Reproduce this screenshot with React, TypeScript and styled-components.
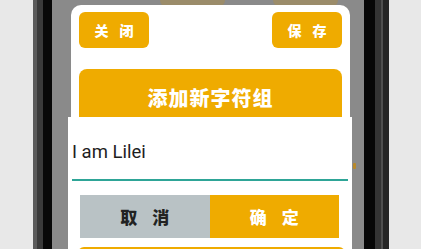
import React from "react";
import styled, { createGlobalStyle } from "styled-components";

const Global = createGlobalStyle`
  html, body { margin: 0; padding: 0; background: #e8e8e8; }
  body {
    width: 421px;
    height: 249px;
    overflow: hidden;
    font-family: Roboto, "Noto Sans CJK SC", sans-serif;
  }
`;

const ORANGE = "#efab00";

const Page = styled.div`
  width: 421px;
  height: 249px;
  box-sizing: border-box;
  display: flex;
  padding-left: 33px;
  background: #e8e8e8;
  overflow: hidden;
`;

const Phone = styled.div`
  display: flex;
  width: 356px;
  height: 100%;
`;

const LeftBezel = styled.div`
  width: 19px;
  flex: none;
  background: linear-gradient(
    to right,
    #5b5b5b 0 4px,
    #3a3a3a 4px 10px,
    #080808 10px 19px
  );
`;

const RightBezel = styled.div`
  width: 25px;
  flex: none;
  background: linear-gradient(
    to right,
    #070707 0 11px,
    #343434 11px 17px,
    #505050 17px 19px,
    #262626 19px 25px
  );
`;

const Screen = styled.div`
  flex: 1;
  position: relative;
  background: #8a8a8a;
  overflow: hidden;
`;

const Backdrop = styled.div`
  display: flex;
  flex-direction: column;
`;

const BackdropRow = styled.div`
  display: flex;
  gap: 48px;
  padding-left: 108px;
`;

const FadedButton = styled.div`
  width: 65px;
  height: 7px;
  background: #9b8c6a;
  border-radius: 0 0 8px 8px;
`;

const FadedMark = styled.div`
  margin: 156px 0 0 301px;
  width: 3px;
  height: 6px;
  background: #b8892a;
  border-radius: 1px;
`;

const ModalLayer = styled.div`
  position: absolute;
  inset: 0;
  padding: 5px 0 0 19px;
`;

const Card = styled.div`
  width: 279px;
  height: 300px;
  box-sizing: border-box;
  background: #fff;
  border-radius: 10px 10px 0 0;
  padding: 7px 8px 0;
  display: flex;
  flex-direction: column;
`;

const CardHeader = styled.div`
  display: flex;
  justify-content: space-between;
`;

const PillButton = styled.div`
  width: 70px;
  height: 36px;
  box-sizing: border-box;
  display: flex;
  align-items: center;
  justify-content: center;
  background: ${ORANGE};
  border-radius: 6px;
  color: #fff;
  font-family: "Noto Sans CJK SC", sans-serif;
  font-size: 14px;
  font-weight: 900;
  letter-spacing: 11px;
  padding-left: 11px;
`;

const TitleBar = styled.div`
  margin-top: 21px;
  height: 56px;
  display: flex;
  align-items: center;
  justify-content: center;
  background: ${ORANGE};
  border-radius: 8px 8px 0 0;
  color: #fff;
  font-family: "Noto Sans CJK SC", sans-serif;
  font-size: 20px;
  font-weight: 900;
  letter-spacing: 1px;
`;

const Alert = styled.div`
  position: absolute;
  top: 117px;
  left: 16px;
  width: 284px;
  height: 200px;
  box-sizing: border-box;
  background: #fff;
  padding: 23px 4px 0;
  display: flex;
  flex-direction: column;
`;

const InputText = styled.div`
  font-family: Roboto, sans-serif;
  font-size: 18.5px;
  line-height: 24px;
  color: #1e1e1e;
`;

const Underline = styled.div`
  margin-top: 15px;
  height: 2px;
  background: #2ea597;
`;

const ButtonRow = styled.div`
  display: flex;
  height: 43px;
  margin: 14px 9px 0 8px;
`;

const ActionButton = styled.div<{ $primary?: boolean }>`
  flex: 1;
  display: flex;
  align-items: center;
  justify-content: center;
  background: ${(p) => (p.$primary ? ORANGE : "#b9c2c5")};
  color: ${(p) => (p.$primary ? "#fff" : "#222")};
  font-family: "Noto Sans CJK SC", sans-serif;
  font-size: 17px;
  font-weight: 900;
  letter-spacing: 15px;
  padding-left: 15px;
`;

const BottomBar = styled.div`
  margin: 9px 3px 0 6px;
  height: 14px;
  background: ${ORANGE};
  border-radius: 6px 6px 0 0;
`;

export default function App() {
  return (
    <>
      <Global />
      <Page>
        <Phone>
          <LeftBezel />
          <Screen>
            <Backdrop>
              <BackdropRow>
                <FadedButton />
                <FadedButton />
              </BackdropRow>
              <FadedMark />
            </Backdrop>
            <ModalLayer>
              <Card>
                <CardHeader>
                  <PillButton>关闭</PillButton>
                  <PillButton>保存</PillButton>
                </CardHeader>
                <TitleBar>添加新字符组</TitleBar>
              </Card>
            </ModalLayer>
            <Alert>
              <InputText>I am Lilei</InputText>
              <Underline />
              <ButtonRow>
                <ActionButton>取消</ActionButton>
                <ActionButton $primary>确定</ActionButton>
              </ButtonRow>
              <BottomBar />
            </Alert>
          </Screen>
          <RightBezel />
        </Phone>
      </Page>
    </>
  );
}
